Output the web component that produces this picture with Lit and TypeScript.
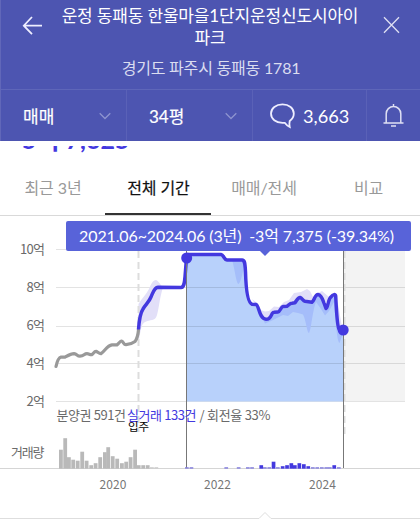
import { LitElement, html, svg, css } from "lit";
import { customElement } from "lit/decorators.js";

const PRESALE =
  "M56 366.5C57 362 59 357.5 61 357L65 357.2C68 355.5 71 353.6 74 353.6C77 354 77 356 80 356.2C84 356.2 84 353.6 87 353.6C89 353.6 90 355 92 354.6C94 353 94 351.4 96 351.4C98 352 99 353.8 101 353.6C105 351 107 345.5 112 344.8L117 344.8C119 343.5 120 341 121.5 341C123.5 341.5 123.5 344.6 126 344.7C129 344.5 133 343 135 341.5C137 339 138 335 138.5 330";
const TRADE =
  "M138.5 329.5C139 322 141 312 143 309C146 304 149 302 151 297C153 293 154 287.5 158 287.2L181 287.5C184 287.3 184.5 283 185 277L186.5 258L188 254.5L221 254.5C224 255 224 260 227 260.1L242 260.1C244.5 260.2 245 262 245.5 272C246 290 248 303 252 304.2L256 304.4C259 305 259 319 266 319.3C272 319.5 271 312 274 312.2L278 312C280 312 281 306.5 283 306.4L287 306.2C289 305 290 303 292 303.2L295 302.8C297 300 298 297.4 300 297.4C302 298 303 300.8 305 301.3L312 302.2C314 301 315 294.6 318 294.6C321 295 323 300 324 303L326 308.5C328 308 328 299 331 297C333 294 335.5 294 335.7 296C336.2 306 337 326 339 329L343 330";
const BARS_GRAY: [number, number][] = [
  [59, 19], [63.3, 30.5], [67, 11.5], [71.3, 9], [75.8, 8], [80.3, 17], [84.7, 8], [89.3, 3.5], [93.7, 5.5],
  [98.3, 11.5], [103, 16.5], [106.3, 21.5], [110.8, 12.5], [115.3, 10], [120, 5.5], [124.3, 7], [128.7, 11.5],
  [133.2, 19], [136.8, 3.5], [141.3, 3.5], [145.8, 3.5], [150, 1.5], [154.4, 1.5],
];
const BARS_BLUE: [number, number][] = [
  [185, 1.5], [189.6, 1.5], [224.4, 1.5], [236.8, 1.5], [246, 1.5], [250.2, 1.5], [259.4, 3.5], [263, 1.5],
  [267.4, 1.5], [271.7, 7], [276, 1.5], [280.8, 2.5], [285.2, 3.5], [289.5, 5.5], [293, 3.5], [297.5, 5.5],
  [302, 4.5], [306.4, 2.5], [311, 1.5], [315.4, 1.5], [320, 1.5], [324.4, 1.5], [328, 1.5], [332.4, 3.5], [337, 1.5],
];

@customElement("app-root")
export class AppRoot extends LitElement {
  static styles = css`
    :host {
      display: block;
      position: relative;
      width: 420px;
      height: 522px;
      overflow: hidden;
      background: #fff;
      font-family: Lato, "Noto Sans CJK KR", sans-serif;
    }
    svg { display: block; }
    header {
      height: 141px;
      box-sizing: border-box;
      background: #4d55b1;
      color: #fff;
      border-left: 1px solid #6167b9;
    }
    .top {
      height: 89px;
      display: grid;
      grid-template-columns: 60px 298px 1fr;
    }
    .back { padding: 16px 0 0 21px; }
    .close { padding: 16px 0 0 24px; }
    .titles { text-align: center; padding-top: 5px; }
    h1 {
      margin: 0;
      font-size: 17px;
      font-weight: 400;
      line-height: 22px;
      letter-spacing: -0.16px;
      white-space: nowrap;
    }
    .addr {
      margin-top: 6px;
      font-size: 16px;
      line-height: 26px;
      letter-spacing: -0.2px;
      padding-left: 2px;
      color: #dbddf0;
    }
    .filters {
      height: 52px;
      box-sizing: border-box;
      border-top: 1px solid #5e66b9;
      display: grid;
      grid-template-columns: 126px 126px 114px 1fr;
      font-size: 18px;
    }
    .cell {
      display: flex;
      align-items: center;
      justify-content: space-between;
      padding: 0 15px 0 22px;
      border-right: 1px solid #5a61b7;
      -webkit-text-stroke: 0.2px currentColor;
      font-size: 17px;
    }
    .cell.chat { justify-content: flex-start; gap: 8px; padding: 0 0 0 17px; font-size: 18.2px; -webkit-text-stroke: 0; }
    .cell.bell { justify-content: center; padding: 0; border: 0; }
    .price {
      height: 20px;
      margin-top: 5px;
      padding-left: 22px;
      overflow: hidden;
      display: flex;
      align-items: flex-start;
      color: #4338df;
      font-size: 25px;
      font-weight: 700;
      line-height: 24px;
    }
    .price span { margin-top: -19px; }
    nav {
      height: 50px;
      box-sizing: border-box;
      border-bottom: 1px solid #d9d9d9;
      display: grid;
      grid-template-columns: 105px 106px 105px 104px;
      font-size: 16px;
      color: #999;
    }
    .tab {
      height: 49px;
      box-sizing: border-box;
      text-align: center;
      line-height: 44px;
      white-space: nowrap;
      letter-spacing: -0.1px;
      padding-left: 1px;
    }
    .tab.on { color: #111; -webkit-text-stroke: 0.2px currentColor; border-bottom: 2px solid #333; }
    .chart { font-family: "Noto Sans CJK KR", sans-serif; }
    .lbl { font-size: 13px; fill: #6a6a6a; }
    .year { font-size: 12px; fill: #777; }
    .tip {
      position: absolute;
      left: 66px;
      top: 221px;
      width: 345px;
      height: 30px;
      border-radius: 2px;
      background: #5863d9;
      color: #fff;
      font-size: 16px;
      letter-spacing: -0.13px;
      text-indent: -4px;
      line-height: 29px;
      text-align: center;
      white-space: pre;
    }
    .tip::after {
      content: "";
      position: absolute;
      left: 194px;
      top: 30px;
      border: 5px solid transparent;
      border-top-color: #5863d9;
      border-bottom: 0;
    }
  `;

  private chevron() {
    return html`<svg width="12" height="8" viewBox="0 0 12 8" fill="none" stroke="#8d93cf" stroke-width="1.3"><path d="M.7 1.2 6 6.5l5.3-5.3" /></svg>`;
  }

  render() {
    return html`
      <header>
        <div class="top">
          <div class="back">
            <svg width="22" height="20" viewBox="0 0 22 20" fill="none" stroke="#eef" stroke-width="1.8"><path d="M20 9.7H2M10 1 1.8 9.7 10 18.2" /></svg>
          </div>
          <div class="titles">
            <h1>운정 동패동 한울마을1단지운정신도시아이<br />파크</h1>
            <div class="addr">경기도 파주시 동패동 1781</div>
          </div>
          <div class="close">
            <svg width="17" height="18" viewBox="0 0 17 18" fill="none" stroke="#dfe0f3" stroke-width="1.3"><path d="M1 1.3 16 16.7M16 1.3 1 16.7" /></svg>
          </div>
        </div>
        <div class="filters">
          <div class="cell"><span>매매</span>${this.chevron()}</div>
          <div class="cell"><span>34평</span>${this.chevron()}</div>
          <div class="cell chat">
            <svg width="25" height="26" viewBox="0 0 25 26" fill="none" stroke="#eef" stroke-width="1.8"><path d="M12.5 1.4C6 1.4 1 5.2 1 10.6s4.8 9.2 11.5 9.2h2.2c1.2 1.6 2.8 3.2 5 4.2-.5-2-.4-4 0-6 2.5-1.7 4.1-4.2 4.1-7.4 0-5.4-4.8-9.2-11.3-9.2z" /></svg>
            <span>3,663</span>
          </div>
          <div class="cell bell">
            <svg width="21" height="23" viewBox="0 0 21 23" fill="none" stroke="#dfe0f4" stroke-width="1.5"><path d="M10.5 0v3M3.2 18.5V9.8a7.3 7.3 0 0 1 14.6 0v8.7M.5 18.9h20M8 22h5" /></svg>
          </div>
        </div>
      </header>
      <div class="price"><span>5억 7,625</span></div>
      <nav>
        <div class="tab">최근 3년</div>
        <div class="tab on">전체 기간</div>
        <div class="tab">매매/전세</div>
        <div class="tab">비교</div>
      </nav>
      <svg class="chart" width="420" height="306" viewBox="0 216 420 306">
        <defs>
          <clipPath id="below"><path d="${TRADE}V401H138.5Z" /></clipPath>
        </defs>
        <rect x="344" y="250" width="61" height="151" fill="#f3f3f3" />
        <path d="M186.5 258L188 254.5${TRADE.split("L188 254.5")[1]}V401H186.5Z" fill="#b8d1fb" />
        <path d="M56 249.5H405M56 287.5H405M56 326.5H405M56 363.5H405M56 401.5H405" stroke="#000" stroke-opacity=".11" />
        <path d="M186.5 401H343" stroke="#b8d1fb" />
        <path d="M138.5 304C142 298 146 295 149 289C151 284 153 280 156 280C159 281 161 286 163 287.5C160 296 159 308 157 315C155 322 150 319 145 322C141 324 141 330 138.5 342Z" fill="#e2dff8" />
        <path d="M252 299L257 303 261 310 265 311.5 269 311 274 306.5 279 307 284 302 289 300 294 293 301 292 307 289 310 291 313 297 318 293 322 291 329 297 334 293 338 304 342 327 337 329 334 298 328 303 318 297 311 304 300 301 289 308 274 315 266 322Z" fill="#e2dff8" />
        <path d="M232 260C235 269 236 283 238.5 284C241 283 243 270 245 264V260Z" fill="#a5befa" />
        <g clip-path="url(#below)">
          <path d="M250 302L258 309 265 323.5 271 321 277 318 283 315 288 316 293 312 298 313 303 314.5C306 320 307 333 309 333C311 331 313 308 316 302L321 309 325 315.5 329 311 334 302C336 325 337 341 339.5 343L343 333V294L325 290 300 294 270 309 260 309Z" fill="#a5bdfa" />
        </g>
        <path d="M138.5 251V432M344.5 251V434" stroke="#ddd" stroke-width="2" stroke-dasharray="7 4" />
        <path d="${PRESALE}" fill="none" stroke="#999" stroke-width="3.2" stroke-linecap="round" stroke-linejoin="round" />
        <path d="${TRADE}" fill="none" stroke="#4338df" stroke-width="3.5" stroke-linejoin="round" />
        <path d="M186.5 251V468M343.5 251V468" stroke="#777" />
        <circle cx="186.7" cy="258" r="5.5" fill="#4338df" />
        <circle cx="343.2" cy="330" r="5.5" fill="#4338df" />
        ${["10억", "8억", "6억", "4억", "2억"].map(
          (t, i) => svg`<text class="lbl" x="45" y=${[254, 292, 330, 367.5, 406][i]} text-anchor="end" textLength=${i ? 18.5 : 25}>${t}</text>`,
        )}
        <text class="lbl" x="56.5" y="420" textLength="69.5">분양권 591건</text>
        <text class="lbl" x="127" y="420" textLength="69.5" style="fill:#4338df">실거래 133건</text>
        <text class="lbl" x="199.5" y="420" textLength="71">/ 회전율 33%</text>
        <text x="128" y="430.5" textLength="21" font-size="11.5" fill="#000">입주</text>
        <text class="lbl" x="11" y="457" textLength="33.5">거래량</text>
        <path d="M0 468.5H420" stroke="#d5d5d5" />
        ${BARS_GRAY.map(([x, h]) => svg`<rect x=${x} y=${468.7 - h} width="3.8" height=${h} fill=${h < 2 ? "#ccc" : "#b9b9b9"} />`)}
        ${BARS_BLUE.map(([x, h]) => svg`<rect x=${x} y=${468.7 - h} width="3.7" height=${h} fill=${h < 2 ? "#8580dd" : "#4338df"} />`)}
        <text class="year" x="99.5" y="489" textLength="27">2020</text>
        <text class="year" x="204" y="489" textLength="27">2022</text>
        <text class="year" x="309" y="489" textLength="27">2024</text>
        <path d="M0 518.5H259L265 512.5 271 518.5H420" fill="none" stroke="#dedede" />
      </svg>
      <div class="tip">2021.06~2024.06 (3년)  -3억 7,375 (-39.34%)</div>
    `;
  }
}
